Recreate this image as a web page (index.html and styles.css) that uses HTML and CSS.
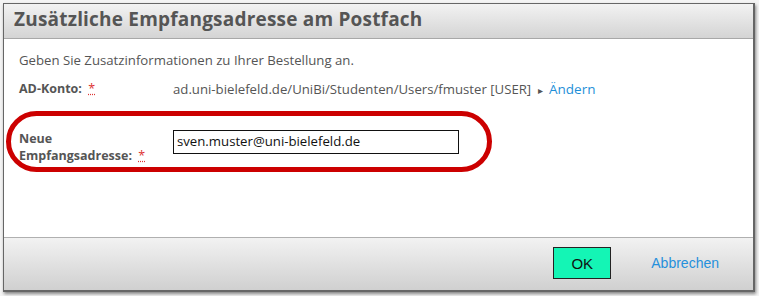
FILE: index.html
```html
<!DOCTYPE html>
<html lang="de">
<head>
<meta charset="utf-8">
<link rel="stylesheet" href="styles.css">
</head>
<body>
<div class="page">
  <div class="dialog">
    <div class="header">Zusätzliche Empfangsadresse am Postfach</div>
    <div class="body">
      <p class="intro">Geben Sie Zusatzinformationen zu Ihrer Bestellung an.</p>
      <div class="row row-ad">
        <div class="label">AD-Konto: <abbr class="req">*</abbr></div>
        <div class="value">ad.uni-bielefeld.de/UniBi/Studenten/Users/fmuster [USER] <span class="tri">&#9656;</span> <a class="link">Ändern</a></div>
      </div>
      <div class="row row-mail">
        <div class="label">Neue<br>Empfangsadresse: <abbr class="req">*</abbr></div>
        <div class="value"><div class="input">sven.muster@uni-bielefeld.de</div></div>
        <div class="mark"></div>
      </div>
    </div>
    <div class="footer">
      <button class="ok">OK</button>
      <a class="cancel">Abbrechen</a>
    </div>
  </div>
</div>
</body>
</html>
```
FILE: styles.css
```css
* { box-sizing: border-box; }
html, body { margin: 0; padding: 0; }
body { width: 759px; height: 296px; background: #f4f4f4; overflow: hidden; font-family: "Open Sans", sans-serif; }
.page { padding: 3px 0 0 3px; }
.dialog {
  width: 752px; height: 289px;
  border: 2px solid #666;
  border-left-width: 1px; border-top-width: 1px;
  background: #fff;
  box-shadow: 1px 2px 3px rgba(0,0,0,0.45);
  display: flex; flex-direction: column;
}
.header {
  height: 35px;
  background: linear-gradient(#f2f2f2, #d4d4d4);
  border-bottom: 1px solid #a8a8a8;
  color: #555;
  font-weight: 700;
  font-size: 19px;
  padding: 2px 0 0 10px;
  letter-spacing: 0.2px;
}
.body { flex: 1; padding: 0 15px; color: #555; font-size: 13.2px; }
.intro { margin: 12px 0 0 0; }
.row { display: flex; position: relative; }
.row-ad { margin-top: 11px; align-items: flex-start; }
.label { width: 154px; font-weight: 700; font-size: 12.5px; color: #555; line-height: 17px; }
.req { color: #d33; text-decoration: underline dotted #d33; font-weight: 400; margin-left: 3px; }
.value { color: #555; }
.tri { color: #555; font-size: 10px; margin: 0 3px; }
.link { color: #1e8fd8; font-size: 13.5px; }
.row-mail { margin-top: 32px; }
.input {
  width: 286px; height: 24px;
  border: 1px solid #111;
  color: #111;
  padding: 1px 0 0 3px;
}
.mark {
  position: absolute; left: -13px; top: -19px;
  width: 486px; height: 61px;
  border: 5px solid #cc0000; border-radius: 31px;
}
.footer {
  height: 53px;
  border-top: 1px solid #b0b0b0;
  background: linear-gradient(#f2f2f2, #d0d0d0);
  display: flex; align-items: center; justify-content: flex-end;
  padding-right: 34px; gap: 40px;
  padding-bottom: 2px;
}
.ok {
  width: 58px; height: 32px;
  background: #14f5b5; border: 1px solid #222;
  font-family: "Liberation Sans", Arial, sans-serif; font-size: 15px; color: #111;
  padding: 0;
}
.cancel { font-family: "Liberation Sans", Arial, sans-serif; font-size: 14px; color: #2590dc; }
```
